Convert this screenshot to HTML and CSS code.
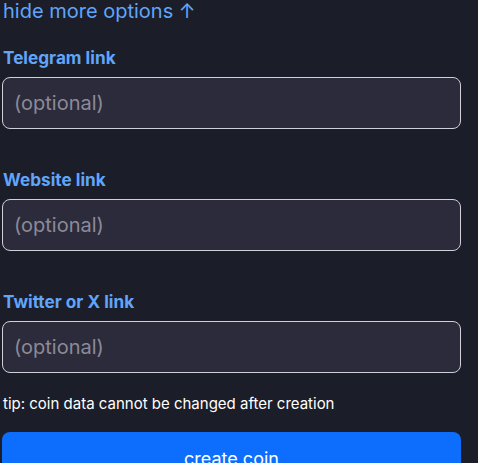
FILE: index.html
```html
<!DOCTYPE html>
<html>
<head>
<meta charset="utf-8">
<link rel="stylesheet" href="styles.css">
</head>
<body>
<div class="form">
  <div class="toggle">hide more options ↑</div>
  <div class="field">
    <label class="label">Telegram link</label>
    <input class="input" type="text" placeholder="(optional)">
  </div>
  <div class="field">
    <label class="label">Website link</label>
    <input class="input" type="text" placeholder="(optional)">
  </div>
  <div class="field">
    <label class="label">Twitter or X link</label>
    <input class="input" type="text" placeholder="(optional)">
  </div>
  <p class="tip">tip: coin data cannot be changed after creation</p>
  <button class="submit">create coin</button>
</div>
</body>
</html>
```

FILE: styles.css
```css
html, body {
  margin: 0;
  padding: 0;
  background: #1b1d28;
  overflow: hidden;
}
body {
  font-family: Inter, "Noto Sans", sans-serif;
  color: #ffffff;
}
.form {
  width: 459px;
  margin-left: 2px;
  margin-top: -3px;
  display: flex;
  flex-direction: column;
}
.toggle {
  font-size: 20px;
  line-height: 28px;
  color: #60a5fa;
  padding-left: 1px;
}
.field {
  display: flex;
  flex-direction: column;
  gap: 7px;
  margin-top: 21px;
}
.field + .field {
  margin-top: 39px;
}
.label {
  font-size: 17.2px;
  line-height: 24px;
  font-weight: 700;
  color: #60a5fa;
  padding-left: 1px;
}
.input {
  box-sizing: border-box;
  height: 52px;
  width: 100%;
  background: #2c2b3b;
  border: 1px solid #cfd0da;
  border-radius: 8px;
  padding: 0 11px;
  font-family: Inter, "Noto Sans", sans-serif;
  font-size: 20px;
  color: #ffffff;
  outline: none;
}
.input::placeholder {
  color: #8b8a98;
}
.tip {
  margin: 20px 0 0 0;
  font-size: 15px;
  line-height: 22px;
  padding-left: 1px;
}
.submit {
  margin-top: 17px;
  height: 52px;
  width: 100%;
  border: none;
  border-radius: 8px;
  background: #0d6efd;
  color: #ffffff;
  font-family: Inter, "Noto Sans", sans-serif;
  font-size: 18px;
}
```
